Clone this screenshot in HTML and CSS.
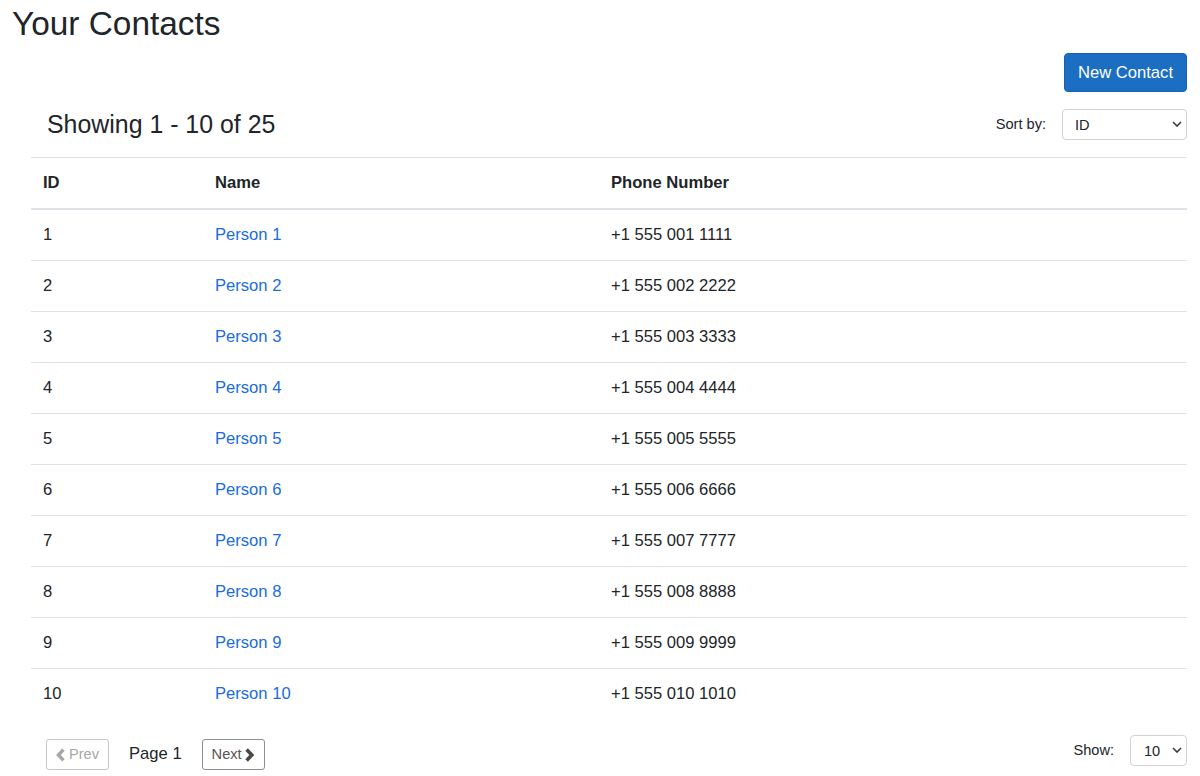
FILE: index.html
```html
<!DOCTYPE html>
<html lang="en">
<head>
    <meta charset="UTF-8">
    <title>Your Contacts</title>
    <link rel="stylesheet" href="styles.css">
</head>
<body>
    <div class="page">
        <h1>Your Contacts</h1>

        <div class="toolbar">
            <button class="btn-primary">New Contact</button>
        </div>

        <div class="contacts">
            <!-- Summary + sort -->
            <div class="list-header">
                <h4>Showing 1 - 10 of 25</h4>
                <div class="field">
                    <label for="sortBy">Sort by:</label>
                    <span class="select-wrap">
                        <select id="sortBy" class="select sort-select">
                            <option>ID</option>
                            <option>Name</option>
                            <option>Phone Number</option>
                        </select>
                        <svg class="caret" width="10" height="6" viewBox="0 0 10 6"><path d="M1 1 L5 5 L9 1" fill="none" stroke="#343a40" stroke-width="1.6"/></svg>
                    </span>
                </div>
            </div>

            <table class="table">
                <thead>
                    <tr>
                        <th class="col-id">ID</th>
                        <th class="col-name">Name</th>
                        <th>Phone Number</th>
                    </tr>
                </thead>
                <tbody>
                    <tr><td>1</td><td><a href="#">Person 1</a></td><td>+1 555 001 1111</td></tr>
                    <tr><td>2</td><td><a href="#">Person 2</a></td><td>+1 555 002 2222</td></tr>
                    <tr><td>3</td><td><a href="#">Person 3</a></td><td>+1 555 003 3333</td></tr>
                    <tr><td>4</td><td><a href="#">Person 4</a></td><td>+1 555 004 4444</td></tr>
                    <tr><td>5</td><td><a href="#">Person 5</a></td><td>+1 555 005 5555</td></tr>
                    <tr><td>6</td><td><a href="#">Person 6</a></td><td>+1 555 006 6666</td></tr>
                    <tr><td>7</td><td><a href="#">Person 7</a></td><td>+1 555 007 7777</td></tr>
                    <tr><td>8</td><td><a href="#">Person 8</a></td><td>+1 555 008 8888</td></tr>
                    <tr><td>9</td><td><a href="#">Person 9</a></td><td>+1 555 009 9999</td></tr>
                    <tr><td>10</td><td><a href="#">Person 10</a></td><td>+1 555 010 1010</td></tr>
                </tbody>
            </table>

            <!-- Paging -->
            <div class="list-footer">
                <div class="pager">
                    <button class="btn-outline btn-prev" disabled>
                        <svg class="chev" width="9" height="14" viewBox="0 0 9 14"><path d="M7.4 1.6 L2.4 7 L7.4 12.4" fill="none" stroke="currentColor" stroke-width="3.4"/></svg>Prev
                    </button>
                    <span class="page-label">Page 1</span>
                    <button class="btn-outline btn-next">
                        Next<svg class="chev" width="11" height="14" viewBox="0 0 11 14"><path d="M2.6 1.6 L7.8 7 L2.6 12.4" fill="none" stroke="#4a4a4a" stroke-width="3.6"/></svg>
                    </button>
                </div>
                <div class="field">
                    <label for="pageSize">Show:</label>
                    <span class="select-wrap">
                        <select id="pageSize" class="select size-select">
                            <option>10</option>
                            <option>25</option>
                            <option>50</option>
                        </select>
                        <svg class="caret" width="10" height="6" viewBox="0 0 10 6"><path d="M1 1 L5 5 L9 1" fill="none" stroke="#343a40" stroke-width="1.6"/></svg>
                    </span>
                </div>
            </div>
        </div>
    </div>
</body>
</html>
```

FILE: styles.css
```css
body {
    margin: 0;
    font-family: "Liberation Sans", Arial, sans-serif;
    font-size: 16.6px;
    line-height: 1.5;
    color: #212529;
    background: #fff;
}
.page {
    padding: 5px 13px 0 12px;
}
h1 {
    margin: 0;
    font-size: 33.4px;
    font-weight: 400;
    line-height: 38px;
}
.toolbar {
    display: flex;
    justify-content: flex-end;
    margin-top: 10px;
}
.btn-primary {
    font-family: inherit;
    font-size: 16.6px;
    line-height: 24px;
    padding: 6.5px 13px;
    color: #fff;
    background-color: #1b6ec2;
    border: 1px solid #1861ac;
    border-radius: 4px;
    cursor: pointer;
}
.contacts {
    margin-left: 19px;
}
.list-header {
    display: flex;
    justify-content: space-between;
    align-items: center;
    padding: 8px 0;
    margin: 9px 0 9px;
}
h4 {
    margin: 0 0 0 16px;
    font-size: 24.9px;
    font-weight: 400;
    line-height: 29px;
}
.field {
    display: flex;
    align-items: center;
    font-size: 14.6px;
}
.field label {
    margin-right: 16px;
}
.select-wrap {
    position: relative;
    display: inline-block;
}
.select {
    display: block;
    appearance: none;
    -webkit-appearance: none;
    font-family: inherit;
    font-size: 14.6px;
    height: 31px;
    padding: 0 24px 0 12px;
    color: #212529;
    background-color: #fff;
    border: 1px solid #ced4da;
    border-radius: 4px;
}
.caret {
    position: absolute;
    right: 5px;
    top: 12px;
    pointer-events: none;
}
.sort-select {
    width: 125px;
}
.size-select {
    width: 57px;
    padding-left: 13px;
}
.table {
    width: 100%;
    border-collapse: collapse;
    border-top: 1px solid #dee2e6;
}
.table th,
.table td {
    text-align: left;
    padding: 13px 12px;
    line-height: 24px;
    vertical-align: top;
}
.table th {
    font-weight: 700;
    border-bottom: 2px solid #dee2e6;
}
.table td {
    border-bottom: 1px solid #dee2e6;
}
.table tbody tr:last-child td {
    border-bottom: none;
}
.col-id {
    width: 148px;
}
.col-name {
    width: 372px;
}
a {
    color: #1a6ce0;
    text-decoration: none;
}
.list-footer {
    display: flex;
    justify-content: space-between;
    align-items: flex-start;
    margin-top: 16px;
}
.pager {
    display: flex;
    align-items: center;
    margin: 4px 0 0 15px;
}
.page-label {
    margin: 0 20px 0 20px;
}
.btn-outline {
    display: flex;
    align-items: center;
    font-family: inherit;
    font-size: 14.6px;
    line-height: 21px;
    height: 31px;
    color: #555;
    background: #fff;
    border: 1px solid #8a8f94;
    border-radius: 3px;
}
.btn-prev {
    padding: 0 9px 0 9px;
}
.btn-prev .chev {
    margin-right: 4px;
}
.btn-next {
    padding: 0 9px 0 9px;
}
.btn-next .chev {
    margin-left: 2px;
}
.btn-outline:disabled {
    color: #a6a6a6;
    border-color: #c4c7ca;
}
```
